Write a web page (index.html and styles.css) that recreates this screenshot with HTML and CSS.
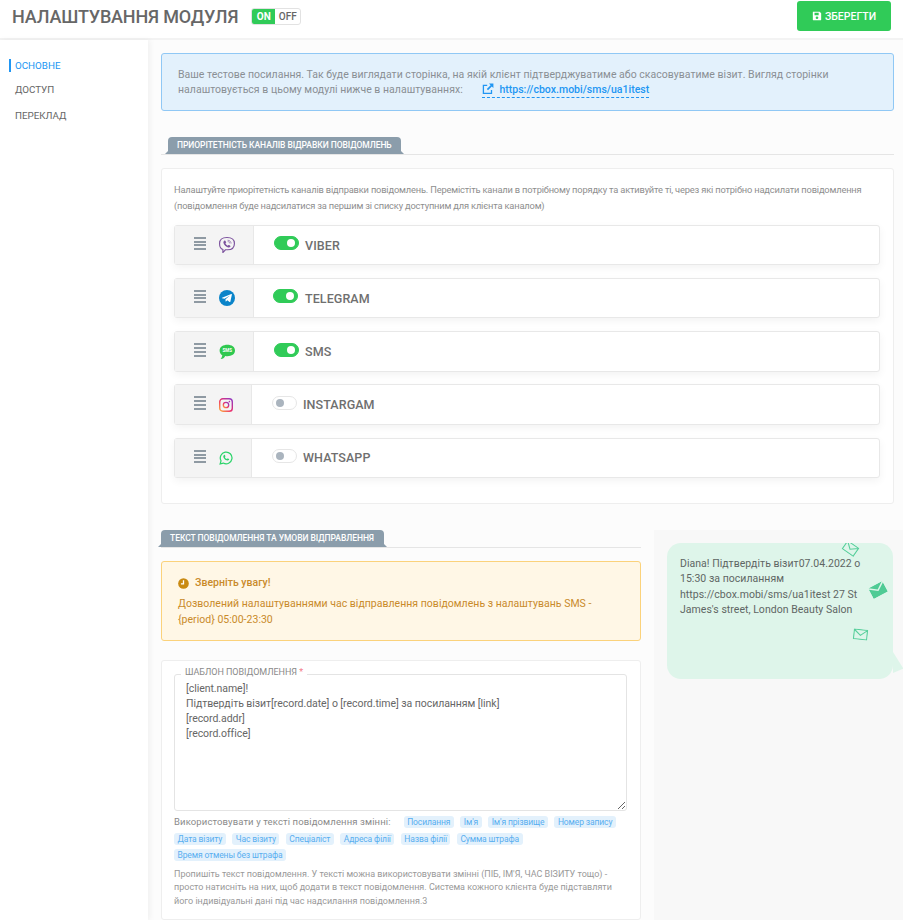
FILE: index.html
```html
<!DOCTYPE html>
<html lang="uk">
<head>
<meta charset="utf-8">
<title>Налаштування модуля</title>
<link rel="stylesheet" href="styles.css">
</head>
<body>
<header class="topbar">
  <h1 class="title">НАЛАШТУВАННЯ МОДУЛЯ</h1>
  <div class="onoff"><span class="on">ON</span><span class="off">OFF</span></div>
  <button class="save"><svg class="save-ico" viewBox="0 0 12 12"><path fill="#fff" fill-rule="evenodd" d="M1.5 1h7.700L11 2.800v7.700c0 .3-.2.5-.5.5h-9a.5.5 0 0 1-.5-.5v-9c0-.3.2-.5.5-.5zM3 2v3h5V2zM6 6.500a1.600 1.600 0 1 0 0 3.200 1.600 1.600 0 0 0 0-3.200z"/></svg>ЗБЕРЕГТИ</button>
</header>
<div class="layout">
  <nav class="side">
    <a class="side-item active">ОСНОВНЕ</a>
    <a class="side-item">ДОСТУП</a>
    <a class="side-item">ПЕРЕКЛАД</a>
  </nav>
  <main class="main">
    <div class="info">
      <p>Ваше тестове посилання. Так буде виглядати сторінка, на якій клієнт підтверджуватиме або скасовуватиме візит. Вигляд сторінки налаштовується в цьому модулі нижче в налаштуваннях:
      <a class="link"><svg class="ext" viewBox="0 0 12 12"><path fill="none" stroke="#2196f3" stroke-width="1.300" d="M9.500 7v3.400H1.400V2.400h3.800"/><path fill="#2196f3" d="M7 .6h4.400V5L9.800 3.400 6 7.200 4.800 6l3.800-3.800z"/></svg>https://cbox.mobi/sms/ua1itest</a></p>
    </div>
    <div class="tab-line first"><span class="tab">ПРИОРІТЕТНІСТЬ КАНАЛІВ ВІДРАВКИ ПОВІДОМЛЕНЬ</span></div>
    <section class="panel channels">
      <p class="hint">Налаштуйте приорітетність каналів відправки повідомлень. Перемістіть канали в потрібному порядку та активуйте ті, через які потрібно надсилати повідомлення (повідомлення буде надсилатися за першим зі списку доступним для клієнта каналом)</p>
      <div class="row r40">
        <div class="handle"><span class="burger"><i></i><i></i><i></i><i></i></span>
          <svg class="ch" viewBox="1 .4 14 15" preserveAspectRatio="none"><path fill="none" stroke="#7b519d" stroke-width="1" d="M8 .9c3.500 0 6.500 1 6.500 5.600 0 4.200-2.400 5.900-6 5.900H6.600L4.400 15v-2.900C2 11.300 1.500 9 1.500 6.500 1.500 2 4.500.9 8 .9z"/><path fill="#7b519d" d="M5.600 3.900c.4-.3.8-.2 1 .2l.6 1c.2.3.1.6-.2.8l-.4.3c.3 1 1.200 1.900 2.100 2.300l.4-.4c.2-.3.5-.3.8-.1l.9.7c.3.2.3.6.1.900-.5.7-1.100.9-1.900.6C7 9.500 5.500 8 4.900 6.100c-.2-.9.1-1.600.7-2.200z"/><path fill="none" stroke="#7b519d" stroke-width=".6" d="M8.500 3.400c1.800.1 3 1.300 3.100 3.100M8.600 4.600c1 .1 1.700.8 1.800 1.800"/></svg>
        </div>
        <div class="cell"><span class="sw is-on"></span><span class="name">VIBER</span></div>
      </div>
      <div class="row r40">
        <div class="handle"><span class="burger"><i></i><i></i><i></i><i></i></span>
          <svg class="ch" viewBox="0 0 16 16"><circle cx="8" cy="8" r="8" fill="#0a84c9"/><path fill="#fff" d="M3 7.800 12.300 4c.4-.1.700.1.600.6l-1.500 7c-.1.500-.5.600-.8.400L8.300 10.300 7 11.500c-.2.200-.4.100-.4-.2l-.1-2L11 5.600 5.500 8.800 3 8.200c-.3-.1-.3-.3 0-.4z"/></svg>
        </div>
        <div class="cell"><span class="sw is-on nudge"></span><span class="name">TELEGRAM</span></div>
      </div>
      <div class="row r41 tight">
        <div class="handle"><span class="burger"><i></i><i></i><i></i><i></i></span>
          <svg class="ch" viewBox="0 0 16 16"><path fill="#2fc84f" d="M8.400 .8c4.200 0 7.600 2.100 7.600 5.700s-3.400 5.700-7.600 5.700c-.8 0-1.500-.1-2.200-.2C5.300 14 3.600 15.200 1.600 15c1-.8 1.500-2.200 1.700-3.700C1.600 10.300.6 8.600.6 6.500.6 2.900 4.200.8 8.400.8z"/><text x="8.300" y="8.200" class="sms-t" text-anchor="middle">SMS</text></svg>
        </div>
        <div class="cell"><span class="sw is-on"></span><span class="name">SMS</span></div>
      </div>
      <div class="row r41 narrow">
        <div class="handle"><span class="burger"><i></i><i></i><i></i><i></i></span>
          <svg class="ch ig" viewBox="0 0 16 16"><defs><linearGradient id="ig" x1="0" y1="1" x2="1" y2="0"><stop offset="0" stop-color="#fdb13c"/><stop offset=".45" stop-color="#ee2f6b"/><stop offset="1" stop-color="#8a3ac8"/></linearGradient></defs><rect x=".8" y=".8" width="14.400" height="14.400" rx="3.600" fill="none" stroke="url(#ig)" stroke-width="1.600"/><circle cx="8" cy="8" r="3.100" fill="none" stroke="url(#ig)" stroke-width="1.500"/><circle cx="11.900" cy="4.100" r=".9" fill="#b03aa8"/></svg>
        </div>
        <div class="cell"><span class="sw"></span><span class="name">INSTARGAM</span></div>
      </div>
      <div class="row r40 narrow">
        <div class="handle"><span class="burger"><i></i><i></i><i></i><i></i></span>
          <svg class="ch wa" viewBox="0 0 16 16"><path fill="none" stroke="#2bd46a" stroke-width="1.400" d="M1.300 14.700l1-3.500A6.700 6.700 0 1 1 4.900 13.800z"/><path fill="#2bd46a" d="M5.800 4.500c.3-.3.700-.2.900.1l.6 1.200c.1.300 0 .5-.2.700l-.4.500c.5 1 1.300 1.700 2.300 2.200l.6-.6c.2-.2.400-.2.700-.1l1.100.6c.3.2.3.6.1.900-.6.900-1.600 1.100-2.600.7C7 10 5.700 8.700 5 7c-.3-.9 0-1.800.8-2.500z"/></svg>
        </div>
        <div class="cell"><span class="sw"></span><span class="name lift">WHATSAPP</span></div>
      </div>
    </section>
    <div class="split">
      <div class="left">
        <div class="tab-line second"><span class="tab">ТЕКСТ ПОВІДОМЛЕННЯ ТА УМОВИ ВІДПРАВЛЕННЯ</span></div>
        <div class="warn">
          <div class="warn-head"><svg class="clock" viewBox="0 0 12 12"><circle cx="6" cy="6" r="5.800" fill="#c98a12"/><path fill="none" stroke="#fff" stroke-width="1.400" d="M6 2.500v3.800H3.200"/></svg>Зверніть увагу!</div>
          <p>Дозволений налаштуваннями час відправлення повідомлень з налаштувань SMS - {period} 05:00-23:30</p>
        </div>
        <section class="panel tpl">
          <div class="field">
            <span class="legend">ШАБЛОН ПОВІДОМЛЕННЯ <b>*</b></span>
            <textarea class="area" spellcheck="false">[client.name]!
Підтвердіть візит[record.date] о [record.time] за посиланням [link]
[record.addr]
[record.office]</textarea>
          </div>
          <div class="vars">
            <span class="vars-label">Використовувати у тексті повідомлення змінні:</span>
            <span class="chip">Посилання</span><span class="chip">Ім'я</span><span class="chip">Ім'я прізвище</span><span class="chip">Номер запису</span><span class="chip">Дата візиту</span><span class="chip">Час візиту</span><span class="chip">Спеціаліст</span><span class="chip">Адреса філії</span><span class="chip">Назва філії</span><span class="chip">Сумма штрафа</span><span class="chip">Время отмены без штрафа</span>
          </div>
          <p class="help">Пропишіть текст повідомлення. У тексті можна використовувати змінні (ПІБ, ІМ'Я, ЧАС ВІЗИТУ тощо) - просто натисніть на них, щоб додати в текст повідомлення. Система кожного клієнта буде підставляти його індивідуальні дані під час надсилання повідомлення.3</p>
        </section>
      </div>
      <aside class="right">
        <div class="bubble">
          <div class="env-layer">
            <svg class="env env1" viewBox="0 0 16 12"><path fill="none" stroke="#58cf9c" stroke-width="1.200" d="M.8.8h14.400v10.400H.8zM.8 1l7.200 6 7.200-6"/></svg>
            <svg class="env env2" viewBox="0 0 16 12"><path fill="#4fcb95" d="M0 1.500 8 7l8-5.500V12H0zM.6 0h14.800L8 5.400z"/></svg>
            <svg class="env env3" viewBox="0 0 16 12"><path fill="none" stroke="#58cf9c" stroke-width="1.200" d="M.8.8h14.400v10.400H.8zM.8 1l7.200 6 7.200-6"/></svg>
          </div>
          <p>Diana! Підтвердіть візит07.04.2022 о 15:30 за посиланням https://cbox.mobi/sms/ua1itest 27 St James's street, London Beauty Salon</p>
          <span class="tail"></span>
        </div>
      </aside>
    </div>
  </main>
</div>
</body>
</html>
```
FILE: styles.css
```css
* { box-sizing: border-box; }
html, body { margin: 0; padding: 0; height: 920px; overflow: hidden; }
body { font-family: Roboto, "Liberation Sans", sans-serif; color: #6b6b6b; background: #fcfcfc; }
p { margin: 0; }

.topbar { display: flex; align-items: center; height: 40px; padding: 0 12px 5px; background: #fff; border-bottom: 2px solid #f3f3f3; }
.title { margin: 0; font-size: 18px; font-weight: 500; color: #676767; letter-spacing: -.16px; }
.onoff { display: flex; margin-left: 13px; height: 17px; border: 1px solid #e2e2e2; border-radius: 3px; overflow: hidden; font-size: 10px; font-weight: 500; }
.on { width: 23px; margin: -1px 0; background: #30cb58; color: #fff; display: flex; align-items: center; justify-content: center; font-weight: 700; }
.off { width: 25px; color: #666; display: flex; align-items: center; justify-content: center; }
.save { display: flex; align-items: center; justify-content: center; margin-left: auto; width: 94px; height: 30px; margin-top: -1px; border: 0; border-radius: 3px; background: #30cb58; color: #fff; font: 500 10.500px Roboto, sans-serif; }
.save-ico { width: 10px; height: 10px; margin-right: 3px; }

.layout { display: flex; height: 880px; }
.side { width: 148px; flex: none; padding-top: 19px; background: #fff; box-shadow: 2px 0 6px rgba(0,0,0,.05); font-size: 9.800px; color: #666; position: relative; }
.side-item { display: block; height: 13px; line-height: 13px; margin-bottom: 13px; padding-left: 15px; }
.side-item.active { color: #2196f3; position: relative; margin-bottom: 11px; }
.side-item.active::before { content: ""; position: absolute; left: 9px; top: 0; width: 2px; height: 13px; background: #2196f3; }

.main { flex: 1; padding: 13px 9px 0 13px; min-width: 0; }
.info { height: 58px; padding: 13px 16px; background: #e3f1fc; border: 1px solid #90c8f5; border-radius: 3px; font-size: 10.500px; line-height: 15px; letter-spacing: .02px; color: #8a8f94; }
.link { color: #2196f3; font-weight: 500; border-bottom: 1px dashed #2196f3; margin-left: 17px; padding-bottom: 1px; }
.ext { width: 12px; height: 12px; margin-right: 5px; vertical-align: -2px; }

.tab-line { display: flex; align-items: flex-end; height: 18px; border-bottom: 1px solid #e5e5e5; }
.tab-line.first { margin-top: 26px; padding-left: 7px; }
.tab-line.second { width: 480px; }
.tab { position: relative; height: 17px; line-height: 17px; padding: 0 9.500px 0 9px; background: #8b9dab; color: #fff; font-size: 8.500px; font-weight: 500; letter-spacing: -.05px; border-radius: 4px 4px 0 0; white-space: nowrap; }
.tab::before, .tab::after { content: ""; position: absolute; bottom: 0; border-bottom: 3px solid #8b9dab; }
.tab::before { left: -3px; border-left: 3px solid transparent; }
.tab::after { right: -3px; border-right: 3px solid transparent; }

.panel { background: #fff; border: 1px solid #eeeeee; border-radius: 3px; }
.channels { margin-top: 13px; height: 336px; padding: 13px 12px 0; }
.hint { font-size: 9.300px; line-height: 16px; color: #8e8e8e; letter-spacing: -.17px; margin-bottom: 11px; }
.row { display: flex; border: 1px solid #e8e8e8; border-radius: 3px; background: #fff; margin-bottom: 13px; box-shadow: 0 3px 8px rgba(0,0,0,.05); width: 706px; }
.r40 { height: 40px; }
.r41 { height: 41px; }
.row.tight { margin-bottom: 12px; }
.handle { display: flex; align-items: center; width: 79px; flex: none; padding-left: 19px; background: #f4f4f4; border-right: 1px solid #e8e8e8; }
.narrow .handle { width: 77px; }
.burger { display: flex; flex-direction: column; gap: 1.700px; width: 12px; margin-top: -3px; }
.burger i { display: block; height: 2px; background: #8f9aa3; }
.ch { width: 16px; height: 16px; margin-left: 13px; flex: none; }
.ig, .wa { width: 14px; height: 14px; }
.cell { display: flex; align-items: center; padding-left: 20px; flex: 1; }
.sw { position: relative; width: 25px; height: 14px; border-radius: 7px; border: 1px solid #e6e6e6; background: #fff; margin-top: -4px; flex: none; }
.sw::after { content: ""; position: absolute; left: 3px; top: 2px; width: 8px; height: 8px; border-radius: 50%; background: #aab4be; }
.sw.is-on { background: #30cb58; border-color: #30cb58; }
.sw.is-on::after { left: auto; right: 3px; top: 2px; background: #fff; }
.sw.nudge { margin-left: -1px; margin-right: 1px; }
.name { margin-left: 6px; font-size: 12.500px; font-weight: 500; letter-spacing: .08px; color: #6f6f6f; }
.name.lift { margin-top: -2px; }
.sms-t { font: 700 4.500px Roboto, sans-serif; fill: #fff; }

.split { display: flex; gap: 13px; margin-top: 26px; align-items: stretch; }
.left { width: 480px; flex: none; }
.right { flex: 1; margin-right: -9px; height: 400px; background: #f8f8f8; padding: 13px 10px 0 13px; }

.warn { margin-top: 13px; height: 80px; padding: 13px 16px; background: #fff7e6; border: 1px solid #fbd27b; border-radius: 3px; color: #c98a2a; font-size: 10.500px; line-height: 16px; letter-spacing: .02px; }
.warn-head { display: flex; align-items: center; font-weight: 500; margin-bottom: 5px; }
.clock { width: 11px; height: 11px; margin-right: 6px; }

.tpl { margin-top: 19px; padding: 13px 12px 12px; height: 260px; }
.field { position: relative; }
.legend { position: absolute; left: 7px; top: -7px; padding: 0 4px; background: #fff; font-size: 9px; line-height: 11px; letter-spacing: -.05px; color: #8a8a8a; }
.legend b { color: #f47c8a; font-weight: 400; }
.area { display: block; width: 453px; height: 137px; padding: 6px 11px; border: 1px solid #e4e4e4; border-radius: 3px; font: 10.500px/15px Roboto, sans-serif; letter-spacing: -.05px; color: #666; background: #fff; resize: vertical; overflow: hidden; outline: 0; }
.vars { display: flex; flex-wrap: wrap; gap: 4.500px 6.500px; margin-top: 5px; width: 455px; }
.vars-label { font-size: 9.500px; line-height: 12px; color: #8a8a8a; margin-right: 6.500px; letter-spacing: .12px; }
.chip { height: 12px; line-height: 12px; padding: 0 3.500px; background: #e3f1fc; color: #58aef0; border-radius: 3px; font-size: 8.500px; letter-spacing: -.12px; }
.help { margin-top: 7px; font-size: 9px; line-height: 13.300px; color: #999; }

.bubble { position: relative; width: 226px; height: 136px; padding: 13px; background: #def5ea; border-radius: 14px; font-size: 10.500px; line-height: 15.300px; letter-spacing: .03px; color: #5f6664; }
.bubble p { position: relative; }
.env-layer { position: absolute; inset: 0; overflow: hidden; border-radius: 14px; }
.tail { position: absolute; right: -10px; top: 109px; width: 10px; height: 21px; background: #def5ea; clip-path: polygon(0 0, 100% 76%, 100% 80%, 0 100%); }
.env { position: absolute; }
.env1 { left: 176px; top: 0; width: 15px; height: 11px; transform: rotate(35deg); }
.env2 { left: 203px; top: 41px; width: 16px; height: 12px; transform: rotate(-28deg); }
.env3 { left: 186px; top: 86px; width: 15px; height: 11px; transform: rotate(6deg); }
```
